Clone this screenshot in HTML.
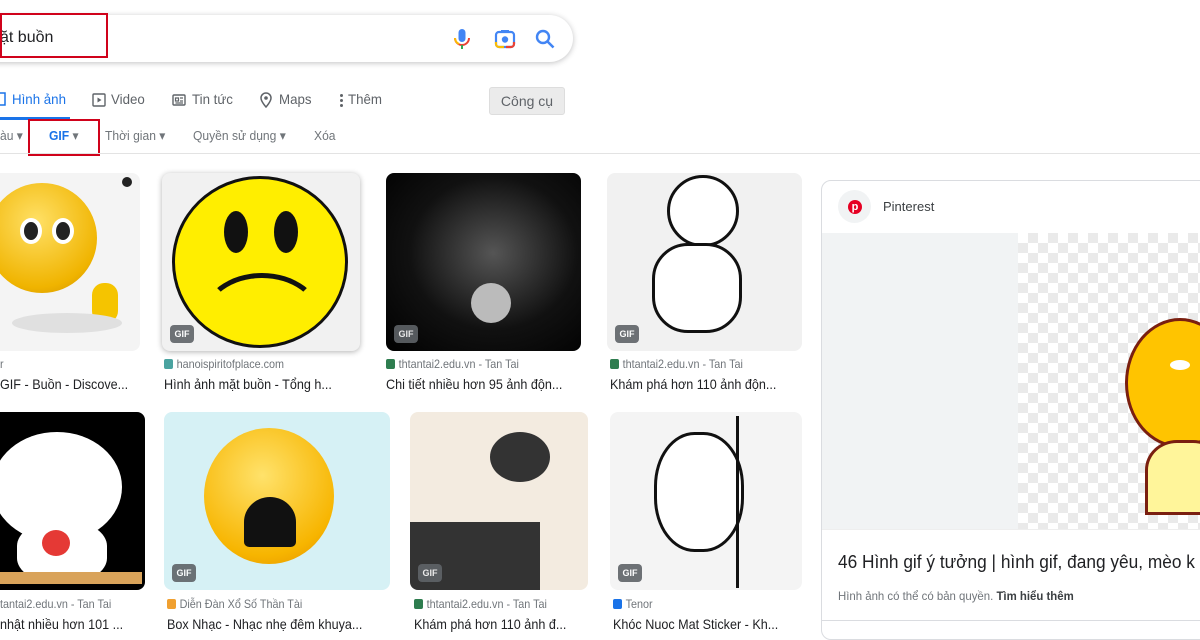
<!DOCTYPE html>
<html><head><meta charset="utf-8"><style>
*{margin:0;padding:0;box-sizing:border-box}
body{width:1200px;height:630px;overflow:hidden;background:#fff;font-family:"Liberation Sans",Arial,sans-serif;position:relative}
.a{position:absolute}
.t{white-space:nowrap}
.tab{font-size:14px;color:#5f6368;top:91px;transform:scaleX(.95);transform-origin:left}
.flt{font-size:13px;color:#70757a;top:128px;transform:scaleX(.93);transform-origin:left}
.img{position:absolute;border-radius:8px;overflow:hidden}
.gif{position:absolute;left:8px;bottom:8px;width:24px;height:18px;border-radius:4px;background:#5f6368;color:#fff;font-size:9px;font-weight:bold;text-align:center;line-height:18px;opacity:.9}
.src{font-size:12px;color:#70757a;transform:scaleX(.9);transform-origin:left}
.ttl{font-size:14px;color:#202124;transform:scaleX(.9);transform-origin:left}
.fav{display:inline-block;width:10px;height:10px;border-radius:2px;vertical-align:-1px;margin-right:4px}
</style></head><body>

<div class="a" style="left:-30px;top:15px;width:603px;height:47px;border-radius:24px;box-shadow:0 1px 6px rgba(32,33,36,.28);background:#fff"></div>
<div class="a t" style="left:0;top:29px;font-size:16px;color:#202124">ặt buồn</div>
<div class="a" style="left:0;top:13px;width:108px;height:45px;border:2px solid #d0021b"></div>
<svg class="a" style="left:452px;top:27px" width="20" height="24" viewBox="0 0 20 24"><rect x="6.5" y="2" width="7" height="13" rx="3.5" fill="#4285f4"/><path d="M3 11a7 7 0 0 0 14 0" stroke="#ea4335" stroke-width="2" fill="none"/><path d="M10 18v4" stroke="#34a853" stroke-width="2"/><path d="M3 11a7 7 0 0 0 4 6" stroke="#fbbc04" stroke-width="2" fill="none"/></svg>
<svg class="a" style="left:494px;top:28px" width="22" height="22" viewBox="0 0 22 22"><rect x="2" y="4" width="18" height="15" rx="3" fill="none" stroke="#4285f4" stroke-width="2.2"/><path d="M2 14v2a3 3 0 0 0 3 3h5" stroke="#fbbc04" stroke-width="2.2" fill="none"/><path d="M12 19h5a3 3 0 0 0 3-3v-2" stroke="#ea4335" stroke-width="2.2" fill="none"/><circle cx="11" cy="11.5" r="3.2" fill="#4285f4"/><rect x="7" y="2" width="8" height="3" fill="#4285f4"/></svg>
<svg class="a" style="left:534px;top:28px" width="22" height="22" viewBox="0 0 22 22"><circle cx="9" cy="9" r="6" fill="none" stroke="#4285f4" stroke-width="2.4"/><path d="M13.5 13.5l6 6" stroke="#4285f4" stroke-width="2.6"/></svg>

<svg class="a" style="left:-6px;top:92px" width="12" height="14"><rect x="1" y="1" width="10" height="12" fill="none" stroke="#1a73e8" stroke-width="1.5"/></svg>
<div class="a t tab" style="left:12px;color:#1a73e8">Hình ảnh</div>
<div class="a" style="left:0;top:117px;width:70px;height:3px;background:#1a73e8"></div>
<svg class="a" style="left:92px;top:93px" width="14" height="14"><rect x="1" y="1" width="12" height="12" rx="1" fill="none" stroke="#5f6368" stroke-width="1.4"/><path d="M5.5 4.5v5l4-2.5z" fill="#5f6368"/></svg>
<div class="a t tab" style="left:111px">Video</div>
<svg class="a" style="left:172px;top:93px" width="14" height="14"><rect x="1" y="2" width="12" height="10" rx="1" fill="none" stroke="#5f6368" stroke-width="1.4"/><path d="M3.5 5h3v3h-3zM8 5h3M8 8h3M3.5 10h7.5" stroke="#5f6368" stroke-width="1.2" fill="none"/></svg>
<div class="a t tab" style="left:192px">Tin tức</div>
<svg class="a" style="left:259px;top:91px" width="14" height="17"><path d="M7 16s-5-5.5-5-9a5 5 0 0 1 10 0c0 3.5-5 9-5 9z" fill="none" stroke="#5f6368" stroke-width="1.5"/><circle cx="7" cy="7" r="1.8" fill="#5f6368"/></svg>
<div class="a t tab" style="left:279px">Maps</div>
<div class="a" style="left:340px;top:94px;width:3px;height:3px;background:#5f6368;border-radius:50%;box-shadow:0 5px 0 #5f6368,0 10px 0 #5f6368"></div>
<div class="a t tab" style="left:348px">Thêm</div>
<div class="a t" style="left:489px;top:87px;width:76px;height:28px;background:#ebebeb;border:1px solid #ddd;border-radius:3px;font-size:14px;color:#5f6368;text-align:center;line-height:26px">Công cụ</div>

<div class="a t flt" style="left:0">àu ▾</div>
<div class="a t flt" style="left:49px;color:#1a73e8;font-weight:bold">GIF <span style="color:#70757a;font-weight:normal">▾</span></div>
<div class="a" style="left:28px;top:119px;width:72px;height:37px;border:2px solid #d0021b"></div>
<div class="a t flt" style="left:105px">Thời gian ▾</div>
<div class="a t flt" style="left:193px">Quyền sử dụng ▾</div>
<div class="a t flt" style="left:314px">Xóa</div>
<div class="a" style="left:0;top:153px;width:1200px;height:1px;background:#e3e3e3"></div>

<div class="img" style="left:-8px;top:173px;width:148px;height:178px;background:#f4f4f4">
 <div class="a" style="left:-5px;top:10px;width:110px;height:110px;border-radius:50%;background:radial-gradient(circle at 45% 35%,#ffe066,#f0b400 70%,#c98a00)"></div>
 <div class="a" style="left:28px;top:45px;width:22px;height:26px;border-radius:50%;background:#222;border:4px solid #fff"></div>
 <div class="a" style="left:60px;top:45px;width:22px;height:26px;border-radius:50%;background:#222;border:4px solid #fff"></div>
 <div class="a" style="left:100px;top:110px;width:26px;height:40px;border-radius:12px;background:#f5c400"></div>
 <div class="a" style="left:20px;top:140px;width:110px;height:20px;border-radius:50%;background:#e0e0e0"></div>
 <div class="a" style="left:130px;top:4px;width:10px;height:10px;border-radius:50%;background:#222"></div>
</div>
<div class="img" style="left:162px;top:173px;width:198px;height:178px;background:#f1f1f1;box-shadow:0 1px 6px rgba(0,0,0,.3)">
 <div class="a" style="left:10px;top:3px;width:176px;height:172px;border-radius:50%;background:#ffee00;border:3px solid #111"></div>
 <div class="a" style="left:62px;top:38px;width:24px;height:42px;border-radius:50%;background:#111"></div>
 <div class="a" style="left:112px;top:38px;width:24px;height:42px;border-radius:50%;background:#111"></div>
 <div class="a" style="left:40px;top:100px;width:120px;height:90px;border-radius:50%;border:5px solid #111;border-bottom-color:transparent;border-left-color:transparent;border-right-color:transparent"></div>
 <div class="gif">GIF</div>
</div>
<div class="img" style="left:386px;top:173px;width:195px;height:178px;background:radial-gradient(ellipse at 55% 45%,#555,#111 55%,#000)">
 <div class="a" style="left:85px;top:110px;width:40px;height:40px;border-radius:50%;background:#bbb"></div>
 <div class="gif">GIF</div>
</div>
<div class="img" style="left:607px;top:173px;width:195px;height:178px;background:#f1f1f1">
 <div class="a" style="left:60px;top:2px;width:72px;height:72px;border-radius:50%;background:#fff;border:3px solid #111"></div>
 <div class="a" style="left:45px;top:70px;width:90px;height:90px;border-radius:40%;background:#fff;border:3px solid #111"></div>
 <div class="gif">GIF</div>
</div>
<div class="a t src" style="left:0;top:357px">r</div>
<div class="a t ttl" style="left:0;top:376px">GIF - Buồn - Discove...</div>
<div class="a t src" style="left:164px;top:357px"><span class="fav" style="background:#4aa3a0"></span>hanoispiritofplace.com</div>
<div class="a t ttl" style="left:164px;top:376px">Hình ảnh mặt buồn - Tổng h...</div>
<div class="a t src" style="left:386px;top:357px"><span class="fav" style="background:#2e7d4f"></span>thtantai2.edu.vn - Tan Tai</div>
<div class="a t ttl" style="left:386px;top:376px">Chi tiết nhiều hơn 95 ảnh độn...</div>
<div class="a t src" style="left:610px;top:357px"><span class="fav" style="background:#2e7d4f"></span>thtantai2.edu.vn - Tan Tai</div>
<div class="a t ttl" style="left:610px;top:376px">Khám phá hơn 110 ảnh độn...</div>

<div class="img" style="left:-8px;top:412px;width:153px;height:178px;background:#000">
 <div class="a" style="left:0;top:20px;width:130px;height:110px;border-radius:50%;background:#fff"></div>
 <div class="a" style="left:25px;top:110px;width:90px;height:60px;border-radius:40%;background:#fff"></div>
 <div class="a" style="left:50px;top:118px;width:28px;height:26px;border-radius:50%;background:#e53935"></div>
 <div class="a" style="left:0;top:160px;width:150px;height:12px;background:#d9a35a"></div>
</div>
<div class="img" style="left:164px;top:412px;width:226px;height:178px;background:#d6f1f5">
 <div class="a" style="left:40px;top:16px;width:130px;height:136px;border-radius:50%;background:radial-gradient(circle at 45% 35%,#ffe26b,#f7b500 70%,#e08a00)"></div>
 <div class="a" style="left:80px;top:85px;width:52px;height:50px;border-radius:50% 50% 10% 10%;background:#111"></div>
 <div class="gif">GIF</div>
</div>
<div class="img" style="left:410px;top:412px;width:178px;height:178px;background:#f3ebe0">
 <div class="a" style="left:0;top:110px;width:130px;height:68px;background:#333"></div>
 <div class="a" style="left:80px;top:20px;width:60px;height:50px;border-radius:50%;background:#333"></div>
 <div class="gif">GIF</div>
</div>
<div class="img" style="left:610px;top:412px;width:192px;height:178px;background:#f4f4f4">
 <div class="a" style="left:44px;top:20px;width:90px;height:120px;border-radius:45%;background:#fff;border:3px solid #111"></div>
 <div class="a" style="left:126px;top:4px;width:3px;height:172px;background:#111"></div>
 <div class="gif">GIF</div>
</div>
<div class="a t src" style="left:0;top:597px">tantai2.edu.vn - Tan Tai</div>
<div class="a t ttl" style="left:0;top:616px">nhật nhiều hơn 101 ...</div>
<div class="a t src" style="left:167px;top:597px"><span class="fav" style="background:#f0a030"></span>Diễn Đàn Xổ Số Thần Tài</div>
<div class="a t ttl" style="left:167px;top:616px">Box Nhạc - Nhạc nhẹ đêm khuya...</div>
<div class="a t src" style="left:414px;top:597px"><span class="fav" style="background:#2e7d4f"></span>thtantai2.edu.vn - Tan Tai</div>
<div class="a t ttl" style="left:414px;top:616px">Khám phá hơn 110 ảnh đ...</div>
<div class="a t src" style="left:613px;top:597px"><span class="fav" style="background:#1a73e8"></span>Tenor</div>
<div class="a t ttl" style="left:613px;top:616px">Khóc Nuoc Mat Sticker - Kh...</div>

<div class="a" style="left:821px;top:180px;width:400px;height:460px;border:1px solid #dadce0;border-radius:10px"></div>
<div class="a" style="left:838px;top:190px;width:33px;height:33px;border-radius:50%;background:#f1f3f4"></div>
<div class="a" style="left:848px;top:200px;width:14px;height:14px;border-radius:50%;background:#e60023;color:#fff;font-size:11px;font-weight:bold;text-align:center;line-height:14px">p</div>
<div class="a t" style="left:883px;top:199px;font-size:13px;color:#3c4043">Pinterest</div>
<div class="a" style="left:822px;top:233px;width:196px;height:296px;background:#f1f3f4"></div>
<div class="a" style="left:1018px;top:233px;width:182px;height:296px;background-color:#fff;background-image:repeating-conic-gradient(#eaeaea 0 25%,#fff 0 50%);background-size:20px 20px"></div>
<div class="a" style="left:1125px;top:318px;width:110px;height:130px;border-radius:50%;background:#ffc400;border:3px solid #7a1f10"></div>
<div class="a" style="left:1145px;top:440px;width:80px;height:75px;border-radius:40% 40% 0 0;background:#fff59a;border:3px solid #7a1f10"></div>
<div class="a" style="left:1170px;top:360px;width:20px;height:10px;border-radius:50%;background:#fff"></div>
<div class="a" style="left:822px;top:529px;width:380px;height:1px;background:#eee"></div>
<div class="a t" style="left:838px;top:552px;font-size:18px;color:#202124;transform:scaleX(.96);transform-origin:left">46 Hình gif ý tưởng | hình gif, đang yêu, mèo k</div>
<div class="a t" style="left:838px;top:589px;font-size:12px;color:#70757a;transform:scaleX(.95);transform-origin:left">Hình ảnh có thể có bản quyền. <b style="color:#3c4043">Tìm hiểu thêm</b></div>
<div class="a" style="left:822px;top:620px;width:380px;height:1px;background:#dadce0"></div>
</body></html>
